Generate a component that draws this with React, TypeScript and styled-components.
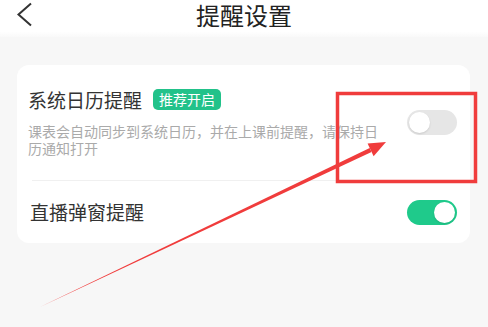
import styled, { createGlobalStyle } from "styled-components";

const GlobalStyle = createGlobalStyle`
    html, body {
        margin: 0;
        padding: 0;
        background: #f7f7f7;
        font-family: "Noto Sans CJK SC", "Noto Sans", sans-serif;
    }
`

const Page = styled.div`
    position: relative;
    width: 488px;
    height: 327px;
    overflow: hidden;
    background: #f7f7f7;
`

const Header = styled.div`
    height: 37px;
    background: linear-gradient(#ffffff 85%, #f9f9f9);
    display: grid;
    grid-template-columns: 60px 1fr 60px;
    align-items: start;
`

const BackButton = styled.div`
    display: flex;
    padding: 2px 0 0 15px;
`

const Title = styled.div`
    text-align: center;
    font-size: 24px;
    line-height: 28px;
    color: #222;
    padding-top: 1px;
`

const Content = styled.div`
    padding: 28px 18px 0 17px;
`

const Card = styled.div`
    background: #fff;
    border-radius: 12px;
    padding: 0 13px 0 11px;
`

const Row = styled.div<{ $height: number }>`
    display: flex;
    align-items: center;
    justify-content: space-between;
    min-height: ${props => props.$height}px;
`

const RowText = styled.div`
    display: flex;
    flex-direction: column;
`

const TitleLine = styled.div`
    display: flex;
    align-items: center;
    gap: 11px;
`

const Label = styled.span<{ $indent?: number }>`
    font-size: 19px;
    line-height: 22px;
    color: #333;
    padding-left: ${props => props.$indent ?? 0}px;
`

const Badge = styled.span`
    background: #22c28a;
    color: #fff;
    font-size: 14px;
    line-height: 21px;
    padding: 0 6px;
    border-radius: 5px;
`

const Description = styled.div`
    width: 352px;
    margin-top: 12px;
    font-size: 14px;
    line-height: 17px;
    color: #aaa;
`

const Divider = styled.div`
    height: 1px;
    background: #f0f0f0;
    margin-left: 4px;
`

const Toggle = styled.div<{ $on: boolean }>`
    position: relative;
    width: 50px;
    height: 25px;
    border-radius: 13px;
    background: ${props => props.$on ? "#1fca8b" : "#e6e6e6"};
    flex-shrink: 0;

    &::after {
        content: "";
        position: absolute;
        top: 2px;
        left: ${props => props.$on ? "27px" : "2px"};
        width: 21px;
        height: 21px;
        border-radius: 50%;
        background: #fff;
        box-shadow: 0 1px 2px rgba(0, 0, 0, 0.12);
    }
`

const Annotation = styled.svg`
    position: absolute;
    left: 0;
    top: 0;
    pointer-events: none;
`

export default function App() {
    return <Page>
        <GlobalStyle />
        <Header>
            <BackButton>
                <svg width="18" height="25" viewBox="0 0 18 25">
                    <path d="M16 1.5 L3.5 12.5 L16 23.5" fill="none" stroke="#333" strokeWidth="2" />
                </svg>
            </BackButton>
            <Title>提醒设置</Title>
            <div />
        </Header>
        <Content>
            <Card>
                <Row $height={115}>
                    <RowText>
                        <TitleLine>
                            <Label>系统日历提醒</Label>
                            <Badge>推荐开启</Badge>
                        </TitleLine>
                        <Description>课表会自动同步到系统日历，并在上课前提醒，请保持日历通知打开</Description>
                    </RowText>
                    <Toggle $on={false} />
                </Row>
                <Divider />
                <Row $height={62}>
                    <Label $indent={2}>直播弹窗提醒</Label>
                    <Toggle $on={true} />
                </Row>
            </Card>
        </Content>
        <Annotation width="488" height="327" viewBox="0 0 488 327">
            <rect x="337.5" y="93.5" width="138" height="88" fill="none" stroke="#f03c3c" strokeWidth="3.5" />
            <polygon points="40,307 369.7,147.9 371.5,151.9" fill="#f03c3c" />
            <polygon points="386,142 367.6,143.6 373.6,156.2" fill="#f03c3c" />
        </Annotation>
    </Page>
}
